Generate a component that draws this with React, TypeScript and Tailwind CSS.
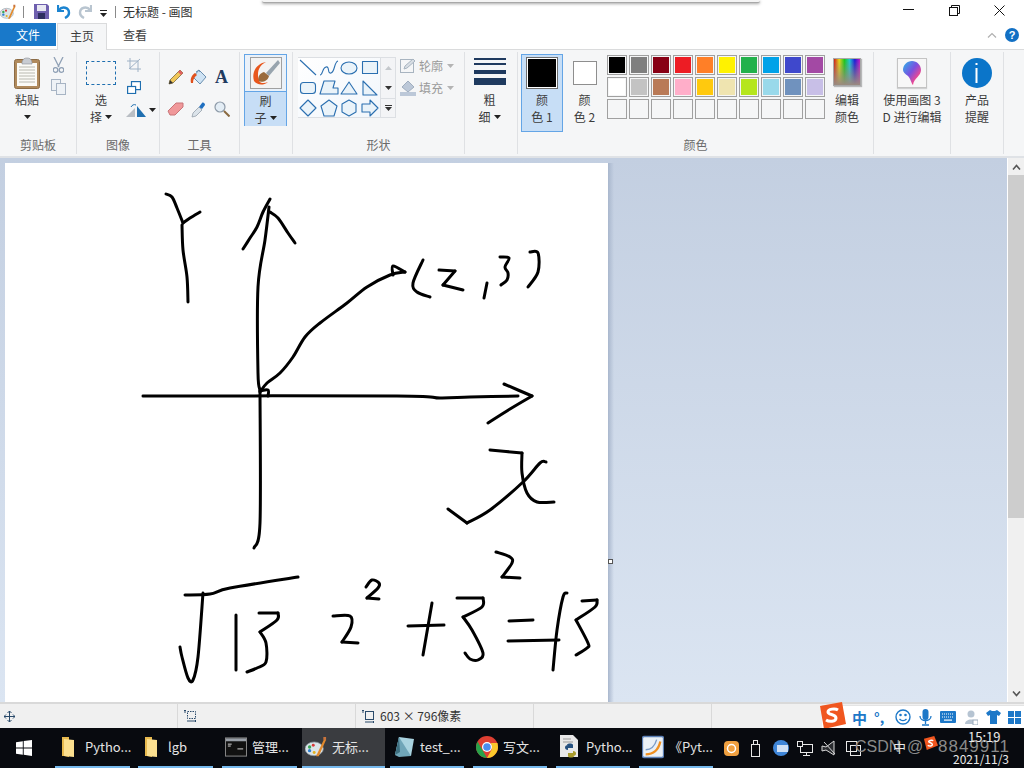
import React from "react";

const R1 = ["#000000","#7f7f7f","#880015","#ed1c24","#ff7f27","#fff200","#22b14c","#00a2e8","#3f48cc","#a349a4"];
const R2 = ["#ffffff","#c3c3c3","#b97a57","#ffaec9","#ffc90e","#efe4b0","#b5e61d","#99d9ea","#7092be","#c8bfe7"];

const STROKES: string[] = [
  "166,194 172,197 177,208 183,223",
  "183,223 190,218 200,212",
  "182,225 183,250 187,277 188,302",
  "243,249 250,238 257,227 263,212 270,199",
  "269,207 265,240 258,287 258,373 260,390",
  "270,212 278,218 288,233 295,243",
  "260,390 260,523 254,548",
  "143,396 397,396 440,398 470,397 518,396",
  "504,384 532,396",
  "532,396 510,409 488,423",
  "260,392 267,383 280,373 293,357 305,337 320,323 347,303 367,287 390,275 405,272",
  "405,272 393,266 393,275",
  "260,391 268,390 268,396",
  "423,260 413,283 417,292 430,297",
  "439,270 455,271",
  "455,271 443,285",
  "443,285 463,290",
  "487,283 484,298",
  "500,257 509,258 505,267 508,273 507,280 501,285",
  "530,252 538,253 538,272 528,287",
  "490,450 522,453",
  "522,453 522,473 527,493 537,502 554,502",
  "546,462 540,463 523,482 490,510 467,523",
  "467,523 448,509",
  "180,647 182,657 188,678 193,680 198,657 203,593",
  "185,595 210,594 230,588 298,577",
  "236,615 236,670",
  "259,613 278,613",
  "278,613 277,620 260,632",
  "260,632 266,643 266,662 257,668 247,672",
  "333,616 350,616 351,627 342,642",
  "342,642 358,643",
  "366,587 372,580 379,583 378,588 367,598",
  "367,598 379,599",
  "408,626 444,625",
  "432,603 423,655",
  "457,598 483,598",
  "483,598 482,607 463,617",
  "463,617 472,630 483,653 478,660 470,659 465,653",
  "496,552 510,557 512,563 502,577",
  "502,577 520,578",
  "509,621 533,620",
  "508,641 559,640",
  "567,593 563,597 557,630 553,670",
  "582,601 597,600",
  "597,600 595,607 576,620",
  "576,620 588,643 587,648 576,655",
];

function smooth(s: string) {
  const p = s.split(" ").map((q) => q.split(",").map(Number));
  let d = `M${p[0][0]} ${p[0][1]}`;
  for (let i = 0; i < p.length - 1; i++) {
    const a = p[Math.max(i - 1, 0)], b = p[i], c = p[i + 1], e = p[Math.min(i + 2, p.length - 1)];
    d += ` C${b[0] + (c[0] - a[0]) / 6} ${b[1] + (c[1] - a[1]) / 6} ${c[0] - (e[0] - b[0]) / 6} ${c[1] - (e[1] - b[1]) / 6} ${c[0]} ${c[1]}`;
  }
  return d;
}

function Drop({ c = "#222" }: { c?: string }) {
  return <svg width="7" height="4" viewBox="0 0 7 4" className="block"><path d="M0 0h7L3.500 4z" fill={c} /></svg>;
}

function PaintIcon({ s = 18 }: { s?: number }) {
  return (
    <svg width={s} height={s} viewBox="0 0 24 24">
      <ellipse cx="10" cy="14" rx="10" ry="7.500" fill="#dbe4e8" stroke="#8a97a0" strokeWidth="0.800" />
      <circle cx="5" cy="12" r="1.800" fill="#3aa655" /><circle cx="9" cy="10" r="1.600" fill="#d93a3a" />
      <circle cx="5" cy="16" r="1.800" fill="#2f7fd0" /><circle cx="10" cy="18" r="1.600" fill="#e0b020" />
      <path d="M12 22 21 3l2 1-8 18z" fill="#e28a2c" /><path d="M20 1h3v4l-3-1z" fill="#c9743c" />
    </svg>
  );
}

function Group({ w, label, children }: { w: string; label: string; children: React.ReactNode }) {
  return (
    <div className={`${w} shrink-0 h-[102px] flex flex-col border-r border-[#dfe1e4] my-[2px]`}>
      <div className="h-[82px] shrink-0 relative flex">{children}</div>
      <div className="h-[20px] mt-[1px] flex items-center justify-center text-[12px] text-[#6a6a6a]">{label}</div>
    </div>
  );
}

function Two({ a, b, arrow }: { a: string; b: string; arrow?: boolean }) {
  return (
    <div className="flex flex-col items-center text-[12px] leading-[17px] text-[#3c3c3c]">
      <span>{a}</span>
      <span className="flex items-center gap-[3px] whitespace-nowrap">{b}{arrow && <Drop />}</span>
    </div>
  );
}

function Shape({ d }: { d: React.ReactNode }) {
  return <svg width="20" height="20" viewBox="0 0 20 20" fill="#eaf3f9" stroke="#2a6fb0" strokeWidth="1.100" strokeLinejoin="round">{d}</svg>;
}

const SHAPES: React.ReactNode[] = [
  <path d="M2 2l16 15" fill="none" />,
  <path d="M1 17c3 0 2-7 6-8s1 7 5 6 3-11 7-12" fill="none" />,
  <ellipse cx="10" cy="10" rx="8" ry="6" />,
  <rect x="2.500" y="3.500" width="15" height="12" />,
  <rect x="2.500" y="4.500" width="15" height="11" rx="3" />,
  <path d="M5 3h11l-2 7h5v6H1z" />,
  <path d="M10 4l8 12H2z" />,
  <path d="M3 3l14 14H3z" />,
  <path d="M10 2l8 8-8 8-8-8z" />,
  <path d="M10 2l8 6-3 10H5L2 8z" />,
  <path d="M10 2l7 4v8l-7 4-7-4V6z" />,
  <path d="M2 6h8V2l8 8-8 8v-4H2z" />,
];

function TaskItem({ w, icon, label, active }: { w: string; icon: React.ReactNode; label: string; active?: boolean }) {
  return (
    <div className={`${w} shrink-0 h-full flex items-center pl-[3px] gap-[5px] border-b-2 border-[#76b9ed] ${active ? "bg-[#3a3c40]" : ""}`}>
      <div className="w-[22px] h-[24px] shrink-0 flex items-center justify-center">{icon}</div>
      <span className="text-[13px] text-[#e4e4e4] whitespace-nowrap">{label}</span>
    </div>
  );
}

function Folder() {
  return (
    <svg className="-ml-[3px]" width="14" height="22" viewBox="0 0 14 22">
      <path d="M1 1h7v20l-5-1H1z" fill="#e7b94e" />
      <path d="M3 3l10 1v17l-10-1z" fill="#fbdf8f" />
    </svg>
  );
}

export default function App() {
  return (
    <div className="relative w-[1024px] h-[768px] overflow-hidden flex flex-col bg-white font-['Noto_Sans_CJK_SC','Noto_Sans',sans-serif] text-[#3c3c3c]">
      {/* popup edge */}
      <div className="absolute left-[262px] top-0 w-[498px] h-[3px] bg-[#f4f4f4] border-b border-[#a8a8a8] rounded-b-[2px] shadow-[0_1px_3px_rgba(0,0,0,0.35)]" />

      {/* title bar */}
      <div className="h-[23px] shrink-0 flex items-center bg-white">
        <div className="w-[23px] h-full flex items-center"><PaintIcon s={16} /></div>
        <div className="w-px h-[12px] bg-[#8a8a8a]" />
        <svg className="ml-[10px]" width="15" height="15" viewBox="0 0 15 15">
          <path d="M0 0h13l2 2v13H0z" fill="#6e5fae" /><rect x="3" y="1" width="9" height="6" fill="#e8e8f2" /><rect x="4" y="9" width="7" height="6" fill="#2f2f60" />
        </svg>
        <svg className="ml-[8px]" width="14" height="15" viewBox="0 0 14 15" fill="none">
          <path d="M1 1v6h6" stroke="#1c84d0" strokeWidth="2.200" /><path d="M2 6c3-4 10-3 10 3 0 2-2 4-4 5" stroke="#1c84d0" strokeWidth="2.400" />
        </svg>
        <svg className="ml-[7px]" width="14" height="15" viewBox="0 0 14 15" fill="none">
          <path d="M13 1v6H7" stroke="#b9c5d0" strokeWidth="2.200" /><path d="M12 6C9 2 2 3 2 9c0 2 2 4 4 5" stroke="#b9c5d0" strokeWidth="2.400" />
        </svg>
        <svg className="ml-[8px] mt-[4px]" width="8" height="7" viewBox="0 0 8 7"><rect y="0" width="7" height="1" fill="#222" /><path d="M0 3h7L3.500 7z" fill="#222" /></svg>
        <div className="w-px h-[12px] bg-[#8a8a8a] ml-[7px]" />
        <span className="ml-[7px] text-[12px] text-[#333] whitespace-nowrap">无标题 - 画图</span>
        <div className="ml-auto flex items-center pr-[19px] -mt-[3px]">
          <svg width="11" height="2" viewBox="0 0 11 2"><rect width="11" height="1" fill="#111" /></svg>
          <svg className="ml-[35px]" width="11" height="11" viewBox="0 0 11 11" fill="none" stroke="#111"><rect x="0.500" y="2.500" width="8" height="8" /><path d="M2.500 2.500v-2h8v8h-2" /></svg>
          <svg className="ml-[34px]" width="11" height="11" viewBox="0 0 11 11" stroke="#111"><path d="M0.500 0.500l10 10M10.500 0.500l-10 10" /></svg>
        </div>
      </div>

      {/* tabs */}
      <div className="h-[26px] shrink-0 flex items-start bg-white">
        <div className="w-[56px] h-[23px] bg-[#1979ca] text-white text-[12px] flex items-center justify-center">文件</div>
        <div className="relative z-10 w-[50px] h-[27px] ml-px pb-[3px] border border-b-0 border-[#dadbdc] bg-[#f5f6f7] text-[12px] flex items-center justify-center">主页</div>
        <div className="w-[56px] h-[23px] text-[12px] flex items-center justify-center">查看</div>
        <div className="ml-auto mr-[5px] mt-[5px] flex items-center gap-[8px]">
          <svg width="10" height="6" viewBox="0 0 10 6" fill="none" stroke="#b0b0b0" strokeWidth="1.200"><path d="M1 5.500l4-4 4 4" /></svg>
          <div className="w-[14px] h-[14px] rounded-full bg-[#1270c4] text-white text-[11px] font-bold flex items-center justify-center font-['Liberation_Sans',sans-serif]">?</div>
        </div>
      </div>

      {/* ribbon */}
      <div className="h-[109px] shrink-0 flex bg-[#f5f6f7] border-t border-[#dadbdc] border-b-2 border-b-[#dfe2e6] overflow-hidden">
        <Group w="w-[77px]" label="剪贴板">
          <div className="w-[54px] shrink-0 flex flex-col items-center pt-[5px]">
            <svg className="shrink-0" width="26" height="32" viewBox="0 0 26 32">
              <rect x="0.500" y="2.500" width="25" height="29" rx="2" fill="#b08a5c" stroke="#8c6c46" />
              <rect x="3" y="6" width="20" height="23" fill="#fbfbf7" />
              <path d="M5 10h16M5 13h16M5 16h16M5 19h16M5 22h16M5 25h16" stroke="#b9b9b0" strokeWidth="1" />
              <path d="M8 5c1-3 2-4 5-4s4 1 5 4v2H8z" fill="#c8ccd2" stroke="#8c8f95" strokeWidth="0.600" />
            </svg>
            <span className="text-[12px] leading-[17px] mt-[2px]">粘贴</span>
            <div className="mt-[7px]"><Drop /></div>
          </div>
          <div className="-ml-[3px] flex flex-col items-center pt-[5px] gap-[6px] w-[15px]">
            <svg width="11" height="16" viewBox="0 0 11 16" fill="none" stroke="#8fa0b5" strokeWidth="1.300"><path d="M1 0l5 10M10 0L5 10" /><circle cx="2.500" cy="13" r="2.300" /><circle cx="8.500" cy="13" r="2.300" /></svg>
            <svg width="15" height="16" viewBox="0 0 15 16" fill="#eef2f6" stroke="#a7b4c4"><rect x="0.500" y="0.500" width="9" height="11" /><rect x="5.500" y="4.500" width="9" height="11" /></svg>
          </div>
        </Group>

        <Group w="w-[83px]" label="图像">
          <div className="w-[48px] flex flex-col items-center pt-[9px]">
            <div className="w-[30px] h-[24px] border border-dashed border-[#1f6fb0]" />
            <div className="mt-[6px]"><Two a="选" b="择" arrow /></div>
          </div>
          <div className="flex flex-col items-start pt-[6px] pl-[2px] gap-[9px]">
            <svg width="14" height="14" viewBox="0 0 14 14" fill="none" stroke="#9fb2c6"><path d="M3 0v11h11M0 3h11v11M2 11L13 1" /></svg>
            <svg width="14" height="13" viewBox="0 0 14 13" fill="#fff" stroke="#1f6fb0" strokeWidth="1.200"><rect x="4.500" y="0.600" width="9" height="8" /><rect x="0.600" y="5.500" width="8" height="7" /></svg>
            <div className="flex items-center gap-[2px] -ml-[2px]">
              <svg width="22" height="14" viewBox="0 0 22 14"><path d="M1 14l9-9v9z" fill="#b9bec4" /><path d="M12 3l9 11h-9z" fill="#1f6fb0" /><path d="M6 4c1-2 3-3 5-2" stroke="#1f6fb0" fill="none" /></svg>
              <Drop />
            </div>
          </div>
        </Group>

        <Group w="w-[80px]" label="工具">
          <div className="grid grid-cols-[23px_23px_23px] auto-rows-[33px] pt-[17px] pl-[4px]">
            <div className="flex justify-center">
              <svg width="16" height="16" viewBox="0 0 16 16"><path d="M1 15l1-4L12 1l3 3L5 14z" fill="#f0c75a" stroke="#6a5a30" strokeWidth="0.700" /><path d="M12 1l3 3-2 2-3-3z" fill="#e06060" /><path d="M1 15l1-4 3 3z" fill="#333" /></svg>
            </div>
            <div className="flex justify-center">
              <svg width="17" height="16" viewBox="0 0 17 16"><path d="M9 1l7 7-6 7-7-7z" fill="#cfe3f4" stroke="#6a8fb0" /><path d="M6 3l3-2 1 2" fill="none" stroke="#6a8fb0" /><path d="M1 14C0 9 2 6 5 4l2 2c-3 2-4 5-4 8z" fill="#e0501c" /></svg>
            </div>
            <div className="flex justify-center">
              <span className="text-[18px] leading-[16px] font-bold text-[#1f3a5f] font-['Liberation_Serif',serif]">A</span>
            </div>
            <div className="flex justify-center">
              <svg width="17" height="14" viewBox="0 0 17 14"><path d="M1 9l8-8h7v4l-8 8H3z" fill="#f0989a" stroke="#c87578" /></svg>
            </div>
            <div className="flex justify-center">
              <svg width="15" height="16" viewBox="0 0 15 16"><path d="M1 15l1-4 6-6 3 3-6 6z" fill="#dbe3ea" stroke="#8a95a0" strokeWidth="0.700" /><path d="M8 5l3-4c1-1 3 0 3 2l-3 4z" fill="#1f6fc0" /></svg>
            </div>
            <div className="flex justify-center -mt-[1px]">
              <svg width="16" height="16" viewBox="0 0 16 16" fill="none"><circle cx="6" cy="6" r="5" fill="#e3edf5" stroke="#8d9aa8" strokeWidth="1.200" /><path d="M10 10l5.500 5.500" stroke="#8a6a40" strokeWidth="2" /></svg>
            </div>
          </div>
        </Group>

        <Group w="w-[53px]" label="">
          <div className="w-[43px] h-[72px] ml-[4px] mt-[2px] border border-[#64a5e6] flex flex-col">
            <div className="h-[36px] flex items-center justify-center shrink-0 bg-[#eaf1f9]">
              <svg width="32" height="32" viewBox="0 0 32 32">
                <rect x="0.500" y="0.500" width="31" height="31" fill="#f3f3f3" stroke="#a0a0a0" />
                <path d="M28 3L16 16l3 3L30 6z" fill="#98a4ae" />
                <path d="M14 15c-4 1-6 4-6 9 4 2 10 0 11-5z" fill="#9a6a3c" />
                <path d="M4 24C1 14 8 6 16 5 10 8 6 14 9 24c1 2 5 3 9 1-5 4-11 3-14-1z" fill="#e8561c" />
              </svg>
            </div>
            <div className="flex-1 bg-[#c7def6] border-t border-[#64a5e6] flex items-center justify-center"><Two a="刷" b="子" arrow /></div>
          </div>
        </Group>

        <Group w="w-[172px]" label="形状">
          <div className="w-[98px] h-[61px] ml-[5px] mt-[5px] border border-[#dcdfe3] bg-white flex shrink-0">
            <div className="grid grid-cols-4 w-[82px] -ml-px content-start bg-gradient-to-br from-white to-[#f1f6fb]">
              {SHAPES.map((d, i) => <Shape key={i} d={d} />)}
            </div>
            <div className="w-[15px] flex flex-col border-l border-[#dcdfe3] bg-[#f3f4f6]">
              <div className="h-[20px] flex items-center justify-center"><svg width="7" height="4" viewBox="0 0 7 4"><path d="M0 4h7L3.500 0z" fill="#c4c8cc" /></svg></div>
              <div className="h-[20px] flex items-center justify-center"><Drop c="#333" /></div>
              <div className="h-[19px] flex flex-col items-center justify-center border-t border-[#dcdfe3] gap-[1px]"><div className="w-[7px] h-px bg-[#333]" /><Drop c="#333" /></div>
            </div>
          </div>
          <div className="flex flex-col pl-[4px] pt-[4px] gap-[3px] text-[12px] text-[#9a9a9a]">
            <div className="h-[19px] flex items-center gap-[2px]">
              <svg width="17" height="15" viewBox="0 0 17 15" fill="none" stroke="#a8b4c0"><rect x="0.500" y="1.500" width="13" height="13" /><path d="M4 11l1-3 8-7 2 2-8 7z" fill="#d8dee4" /></svg>
              <span>轮廓</span><span className="ml-[2px]"><Drop c="#b4b4b4" /></span>
            </div>
            <div className="h-[19px] flex items-center gap-[2px]">
              <svg width="17" height="16" viewBox="0 0 17 16"><path d="M8 1l6 6-6 5-6-5z" fill="#bcc8d8" stroke="#a0aebf" /><rect y="12" width="16" height="4" fill="#bcc8d8" /></svg>
              <span>填充</span><span className="ml-[2px]"><Drop c="#b4b4b4" /></span>
            </div>
          </div>
        </Group>

        <Group w="w-[53px]" label="">
          <div className="w-full flex flex-col items-center pt-[6px] pr-[3px]">
            <div className="w-[32px] flex flex-col">
              <div className="h-[2px] bg-[#1f3a5f]" />
              <div className="h-[2px] bg-[#1f3a5f] mt-[3px]" />
              <div className="h-[4px] bg-[#1f3a5f] mt-[5px]" />
              <div className="h-[7px] bg-[#1f3a5f] mt-[4px]" />
            </div>
            <div className="mt-[6px]"><Two a="粗" b="细" arrow /></div>
          </div>
        </Group>

        <Group w="w-[356px]" label="颜色">
          <div className="w-[42px] h-[78px] ml-[3px] mt-[2px] border border-[#64a5e6] bg-[#c7def6] flex flex-col items-center pt-[2px] shrink-0">
            <div className="w-[32px] h-[32px] border border-[#6d6d6d] p-[1px] bg-white shrink-0"><div className="w-full h-full bg-black" /></div>
            <div className="mt-[2px]"><Two a="颜" b="色 1" /></div>
          </div>
          <div className="w-[41px] ml-px flex flex-col items-center pt-[9px] shrink-0">
            <div className="w-[24px] h-[24px] border border-[#8e8e8e] bg-white shrink-0" />
            <div className="mt-[6px]"><Two a="颜" b="色 2" /></div>
          </div>
          <div className="flex flex-col gap-[2px] pt-[3px] pl-[2px] shrink-0">
            {[R1, R2, Array(10).fill("")].map((row, i) => (
              <div key={i} className="flex gap-[2px]">
                {row.map((c: string, j: number) => (
                  <div key={j} className="w-[20px] h-[20px] border border-[#a0a0a0] p-px">
                    {c ? <div className="w-full h-full" style={{ background: c }} /> : null}
                  </div>
                ))}
              </div>
            ))}
          </div>
          <div className="flex flex-col items-center pl-[2px] pt-[6px] w-[42px] shrink-0">
            <div className="w-[28px] h-[28px] shrink-0 border border-[#a8a8a8] shadow-[1px_1px_1px_rgba(0,0,0,0.25)] bg-[linear-gradient(to_bottom,transparent,#9a8a80),linear-gradient(to_right,#d01818,#e8d818,#18c818,#18c8d8,#1818d8,#c818c8)]" />
            <div className="mt-[5px]"><Two a="编辑" b="颜色" /></div>
          </div>
        </Group>

        <Group w="w-[77px]" label="">
          <div className="w-full flex flex-col items-center pt-[6px]">
            <div className="w-[30px] h-[30px] shrink-0 border border-[#c4c4c4] bg-[#f7f7f7] shadow-[0_1px_1px_rgba(0,0,0,0.15)] flex items-center justify-center">
              <svg width="18" height="24" viewBox="0 0 18 24">
                <defs><linearGradient id="p3d" x1="0" y1="0" x2="1" y2="1"><stop offset="0" stopColor="#28b8e8" /><stop offset="0.450" stopColor="#7a50e0" /><stop offset="0.750" stopColor="#f04890" /><stop offset="1" stopColor="#f8a020" /></linearGradient></defs>
                <path d="M9 0c5 0 9 4 9 9 0 6-7 8-8 15-2-2-2-6-5-9-3-2-5-4-5-6 0-5 4-9 9-9z" fill="url(#p3d)" />
              </svg>
            </div>
            <div className="mt-[3px] text-[12px] leading-[17px] flex flex-col items-center whitespace-nowrap"><span>使用画图 3</span><span>D 进行编辑</span></div>
          </div>
        </Group>

        <Group w="w-[53px]" label="">
          <div className="w-full flex flex-col items-center pt-[6px]">
            <div className="w-[30px] h-[30px] shrink-0 rounded-full bg-[#0b75c9] flex items-center justify-center">
              <svg width="4" height="20" viewBox="0 0 4 20" fill="#fff"><rect x="0.500" width="2" height="2" /><rect x="0.500" y="5" width="2" height="15" /></svg>
            </div>
            <div className="mt-[3px]"><Two a="产品" b="提醒" /></div>
          </div>
        </Group>
        <div className="flex-1" />
      </div>

      {/* workspace */}
      <div className="relative h-[544px] shrink-0 flex overflow-hidden">
        <div className="flex-1 bg-gradient-to-b from-[#c3cfe1] to-[#dbe5f2] pl-[5px] pt-[5px] flex items-start">
          <div className="w-[603px] h-[560px] bg-white shrink-0">
            <svg width="603" height="540" viewBox="5 163 603 540" fill="none" stroke="#000" strokeWidth="3" strokeLinecap="round" strokeLinejoin="round">
              {STROKES.map((p, i) => <path key={i} d={smooth(p)} />)}
            </svg>
          </div>
          <div className="w-[6px] h-full bg-gradient-to-r from-[#a9b7cd] to-transparent shrink-0" />
        </div>
        <div className="absolute left-[608px] top-[401px] w-[5px] h-[5px] bg-white border border-[#555]" />
        <div className="w-[17px] border-l border-white shrink-0 flex flex-col bg-[#f0f0f0]">
          <div className="h-[17px] flex items-center justify-center"><svg width="9" height="6" viewBox="0 0 9 6" fill="none" stroke="#555" strokeWidth="1.600"><path d="M1 5.500l3.500-4 3.500 4" /></svg></div>
          <div className="h-[343px] bg-[#cdcdcd]" />
          <div className="flex-1" />
          <div className="h-[16px] flex items-center justify-center"><svg width="9" height="6" viewBox="0 0 9 6" fill="none" stroke="#555" strokeWidth="1.600"><path d="M1 0.500l3.500 4 3.500-4" /></svg></div>
        </div>
      </div>

      {/* status bar */}
      <div className="h-[26px] shrink-0 flex items-center bg-[#f0f0f0] border-t-2 border-[#d9d9d9] text-[12px] text-[#333]">
        <div className="w-[178px] h-full flex items-center pl-[4px] border-r border-[#d9d9d9]">
          <svg width="11" height="11" viewBox="0 0 11 11" fill="none" stroke="#2a4a6a"><path d="M5.500 0v11M0 5.500h11M3.500 2l2-2 2 2M3.500 9l2 2 2-2M2 3.500l-2 2 2 2M9 3.500l2 2-2 2" /></svg>
        </div>
        <div className="w-[178px] h-full flex items-center pl-[6px] border-r border-[#d9d9d9]">
          <svg width="13" height="12" viewBox="0 0 13 12" fill="none" stroke="#2a4a6a"><path d="M1 3V0M0 1l1-1 1 1" /><rect x="3.500" y="1.500" width="8" height="7" strokeDasharray="1.500 1" /><path d="M3 11h9M11 10l1 1-1 1" /></svg>
        </div>
        <div className="w-[178px] h-full flex items-center pl-[6px] gap-[5px] border-r border-[#d9d9d9]">
          <svg width="13" height="13" viewBox="0 0 13 13" fill="none" stroke="#2a4a6a"><path d="M1 3V0M0 1l1-1 1 1" /><rect x="3.500" y="1.500" width="8" height="8" /><path d="M3 12h9M11 11l1 1-1 1" /></svg>
          <span className="whitespace-nowrap">603 × 796像素</span>
        </div>
        <div className="w-[178px] h-full border-r border-[#d9d9d9]" />
      </div>

      {/* IME bar */}
      <div className="absolute left-[822px] top-[705px] w-[202px] h-[23px] bg-white flex items-center pl-[30px] border-t border-[#e4e4e4]">
        <span className="w-[15px] text-[15px] leading-none font-bold text-[#1d78c8]">中</span>
        <span className="ml-[7px] w-[18px] text-[14px] leading-none font-bold text-[#1d78c8] whitespace-nowrap">°,</span>
        <svg className="ml-[3px]" width="16" height="16" viewBox="0 0 16 16" fill="none" stroke="#1d78c8" strokeWidth="1.400"><circle cx="8" cy="8" r="7" /><circle cx="5.500" cy="6" r="0.600" fill="#1d78c8" /><circle cx="10.500" cy="6" r="0.600" fill="#1d78c8" /><path d="M4.500 10c2 2 5 2 7 0" /></svg>
        <svg className="ml-[8px]" width="13" height="17" viewBox="0 0 13 17" fill="#1d78c8"><rect x="3.500" width="6" height="11" rx="3" /><path d="M1 7c0 6 11 6 11 0M6.500 12v3M3 16h7" fill="none" stroke="#1d78c8" strokeWidth="1.300" /></svg>
        <svg className="ml-[8px]" width="16" height="12" viewBox="0 0 16 12"><rect width="16" height="12" rx="1" fill="#1d78c8" /><path d="M2 3h12M2 6h12" stroke="#fff" strokeDasharray="1 1" /><rect x="4" y="8.500" width="8" height="1.200" fill="#fff" /></svg>
        <svg className="ml-[9px]" width="13" height="15" viewBox="0 0 13 15" fill="#b6c4d2"><circle cx="6" cy="4" r="3.500" /><path d="M0 14c0-6 12-6 12 0z" /><rect x="8" y="10" width="5" height="5" fill="#fff" stroke="#9ab" /></svg>
        <svg className="ml-[8px]" width="15" height="14" viewBox="0 0 15 14" fill="#1d78c8"><path d="M4 0L0 3l2 3 2-1v9h7V5l2 1 2-3-4-3-2 1H6z" /></svg>
        <svg className="ml-[7px]" width="13" height="13" viewBox="0 0 13 13" fill="#1d78c8"><rect width="6" height="6" /><rect x="7" width="6" height="6" /><rect y="7" width="6" height="6" /><rect x="7" y="7" width="6" height="6" /></svg>
      </div>
      <svg className="absolute left-[818px] top-[702px]" width="28" height="27" viewBox="0 0 28 27">
        <path d="M2 4L24 0l4 22-22 5z" fill="#f0561f" />
        <path d="M20 8c-3-2-10-1-10 2s8 2 8 6-7 4-10 2" fill="none" stroke="#fff" strokeWidth="3" />
      </svg>

      {/* taskbar */}
      <div className="relative h-[40px] shrink-0 flex items-stretch bg-[#080a0f]">
        <div className="w-[55px] shrink-0 flex items-center pl-[16px]">
          <svg width="16" height="16" viewBox="0 0 16 16" fill="#fff"><path d="M0 2.200l6.800-1v6.300H0zM7.700 1.100L16 0v7.500H7.700zM0 8.500h6.800v6.300l-6.800-1zM7.700 8.500H16V16l-8.300-1.200z" /></svg>
        </div>
        <TaskItem w="w-[75px]" icon={<Folder />} label="Pytho..." />
        <div className="w-[8px] shrink-0" />
        <TaskItem w="w-[75px]" icon={<Folder />} label="lgb" />
        <div className="w-[9px] shrink-0" />
        <TaskItem w="w-[75px]" icon={
          <svg width="23" height="20" viewBox="0 0 23 20"><rect x="0.500" y="0.500" width="22" height="19" fill="#111" stroke="#8a8a8a" /><rect x="1" y="1" width="21" height="3" fill="#9aa0a8" /><path d="M3 7h4M3 9h3M13 12h6" stroke="#ddd" /></svg>
        } label="管理..." />
        <div className="w-[5px] shrink-0" />
        <TaskItem w="w-[83px]" active icon={<PaintIcon s={22} />} label="无标..." />
        <div className="w-[5px] shrink-0" />
        <TaskItem w="w-[74px]" icon={
          <svg width="22" height="22" viewBox="0 0 22 22"><path d="M6 1l15 2-3 17-16-1z" fill="#a9d3e0" /><path d="M6 1L2 19l4 2 12-1z" fill="#6fa5b8" /><path d="M6 1l-4 18 5-3z" fill="#3d6f80" /></svg>
        } label="test_..." />
        <div className="w-[9px] shrink-0" />
        <TaskItem w="w-[74px]" icon={
          <svg width="22" height="22" viewBox="0 0 22 22"><circle cx="11" cy="11" r="11" fill="#de3f32" /><path d="M11 22A11 11 0 0 1 1.500 5.500L7 15z" fill="#27a24a" /><path d="M22 11a11 11 0 0 1-11 11l5-9 -1-6h6.500z" fill="#fbc82b" /><circle cx="11" cy="11" r="5" fill="#fff" /><circle cx="11" cy="11" r="3.800" fill="#4a8df0" /></svg>
        } label="写文..." />
        <div className="w-[9px] shrink-0" />
        <TaskItem w="w-[74px]" icon={
          <svg width="22" height="24" viewBox="0 0 22 24"><path d="M1 0h13l5 5v17H1z" fill="#e8e8e8" /><path d="M4 4h8M4 7h10" stroke="#999" /><path d="M8 10c0-2 6-2 6 0v3H9v2c-4 0-4-5 0-5z" fill="#25507f" /><path d="M15 21c0 2-6 2-6 0v-3h5v-2c4 0 4 5 0 5z" fill="#a89a2a" /></svg>
        } label="Pytho..." />
        <div className="w-[9px] shrink-0" />
        <TaskItem w="w-[74px]" icon={
          <svg width="24" height="24" viewBox="0 0 24 24"><rect x="0.500" y="0.500" width="23" height="23" rx="2" fill="#eaf0f6" stroke="#5b7fb5" strokeWidth="1.500" /><path d="M4 20c8 0 14-5 16-14" stroke="#f09020" strokeWidth="2.500" fill="none" /><path d="M4 15c6 0 10-4 12-11" stroke="#7a9cc8" strokeWidth="1.500" fill="none" /></svg>
        } label="《Pyt..." />
        <div className="flex-1 flex items-center pl-[11px]">
          <svg width="15" height="15" viewBox="0 0 15 15"><rect width="15" height="15" rx="4" fill="#f0a040" /><circle cx="7.500" cy="7.500" r="4" fill="none" stroke="#fff" strokeWidth="1.500" /></svg>
          <svg className="ml-[12px]" width="10" height="17" viewBox="0 0 10 17" fill="none" stroke="#e8e8e8"><rect x="0.500" y="4.500" width="8" height="12" /><rect x="2.500" y="0.500" width="4" height="4" /></svg>
          <svg className="ml-[12px]" width="16" height="16" viewBox="0 0 16 16"><circle cx="8" cy="8" r="8" fill="#3f86d8" /><rect x="4" y="5" width="11" height="7" fill="#cfe0f4" /></svg>
          <svg className="ml-[8px]" width="16" height="15" viewBox="0 0 16 15" fill="none" stroke="#e8e8e8"><rect x="3.500" y="3.500" width="12" height="8" /><rect x="0.500" y="0.500" width="5" height="5" fill="#080a0f" /><path d="M9.500 11.500v3M6 14.500h7" /></svg>
          <svg className="ml-[8px]" width="16" height="16" viewBox="0 0 16 16" fill="none" stroke="#d8d8d8"><path d="M1 6l4 1 8-6v14l-8-5-4 1z" fill="#2a2c30" /><path d="M3 2l11 12" /></svg>
          <svg className="ml-[9px]" width="15" height="15" viewBox="0 0 15 15" fill="none" stroke="#e8e8e8"><rect x="0.500" y="0.500" width="10" height="10" /><rect x="4.500" y="4.500" width="10" height="10" /></svg>
        </div>
        {/* watermark */}
        <div className="absolute left-[855px] top-[2px] text-[16px] leading-[34px] text-[#8a8a8a] whitespace-nowrap font-['Liberation_Sans',sans-serif]">CSDN</div>
        <div className="absolute left-[893px] top-[9px] text-[13px] leading-[20px] text-[#e8e8e8]">中</div>
        <div className="absolute left-[907px] top-[2px] text-[16px] leading-[34px] text-[#8a8a8a] whitespace-nowrap font-['Liberation_Sans',sans-serif]">@</div>
        <svg className="absolute left-[923px] top-[8px]" width="15" height="15" viewBox="0 0 16 16"><path d="M1 3l11-3 4 10-12 5z" fill="#f0561f" /><path d="M11 5c-2-1-5 0-5 1s4 1 4 3-3 2-5 1" fill="none" stroke="#fff" strokeWidth="1.500" /></svg>
        <div className="absolute left-[938px] top-[2px] text-[17px] leading-[34px] tracking-[1px] text-[#8a8a8a] whitespace-nowrap font-['Liberation_Sans',sans-serif]">8849911</div>
        <div className="absolute left-[968px] top-0 text-[13px] leading-[17px] text-[#e8e8e8] whitespace-nowrap">15:19</div>
        <div className="absolute left-[953px] top-[22px] text-[12px] leading-[17px] text-[#e8e8e8] whitespace-nowrap">2021/11/3</div>
      </div>
    </div>
  );
}
